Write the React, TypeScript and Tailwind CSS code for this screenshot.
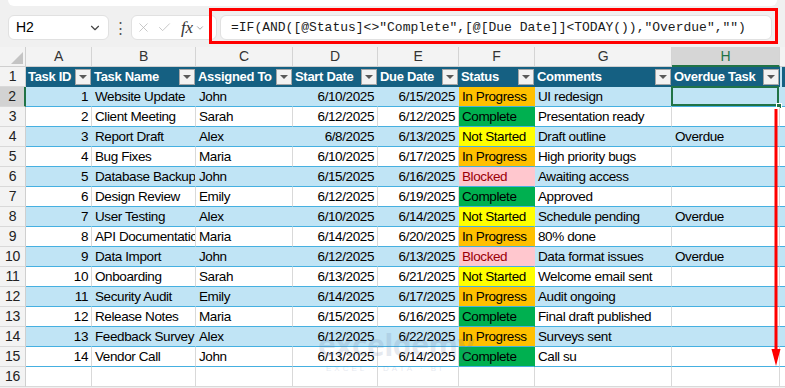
import { X, Check, ChevronDown } from "lucide-react";

type Status = "In Progress" | "Complete" | "Not Started" | "Blocked";

type Task = {
  id: number;
  name: string;
  who: string;
  start: string;
  due: string;
  status: Status;
  comment: string;
  overdue: string;
};

const tasks: Task[] = [
  { id: 1, name: "Website Update", who: "John", start: "6/10/2025", due: "6/15/2025", status: "In Progress", comment: "UI redesign", overdue: "" },
  { id: 2, name: "Client Meeting", who: "Sarah", start: "6/12/2025", due: "6/12/2025", status: "Complete", comment: "Presentation ready", overdue: "" },
  { id: 3, name: "Report Draft", who: "Alex", start: "6/8/2025", due: "6/13/2025", status: "Not Started", comment: "Draft outline", overdue: "Overdue" },
  { id: 4, name: "Bug Fixes", who: "Maria", start: "6/10/2025", due: "6/17/2025", status: "In Progress", comment: "High priority bugs", overdue: "" },
  { id: 5, name: "Database Backup", who: "John", start: "6/15/2025", due: "6/16/2025", status: "Blocked", comment: "Awaiting access", overdue: "" },
  { id: 6, name: "Design Review", who: "Emily", start: "6/12/2025", due: "6/19/2025", status: "Complete", comment: "Approved", overdue: "" },
  { id: 7, name: "User Testing", who: "Alex", start: "6/10/2025", due: "6/14/2025", status: "Not Started", comment: "Schedule pending", overdue: "Overdue" },
  { id: 8, name: "API Documentation", who: "Maria", start: "6/14/2025", due: "6/20/2025", status: "In Progress", comment: "80% done", overdue: "" },
  { id: 9, name: "Data Import", who: "John", start: "6/12/2025", due: "6/13/2025", status: "Blocked", comment: "Data format issues", overdue: "Overdue" },
  { id: 10, name: "Onboarding", who: "Sarah", start: "6/13/2025", due: "6/21/2025", status: "Not Started", comment: "Welcome email sent", overdue: "" },
  { id: 11, name: "Security Audit", who: "Emily", start: "6/14/2025", due: "6/17/2025", status: "In Progress", comment: "Audit ongoing", overdue: "" },
  { id: 12, name: "Release Notes", who: "Maria", start: "6/15/2025", due: "6/16/2025", status: "Complete", comment: "Final draft published", overdue: "" },
  { id: 13, name: "Feedback Survey", who: "Alex", start: "6/12/2025", due: "6/22/2025", status: "In Progress", comment: "Surveys sent", overdue: "" },
  { id: 14, name: "Vendor Call", who: "John", start: "6/13/2025", due: "6/14/2025", status: "Complete", comment: "Call su", overdue: "" },
];

const statusStyle: Record<Status, string> = {
  "In Progress": "bg-[#ffc000] text-black",
  Complete: "bg-[#00b050] text-black",
  "Not Started": "bg-[#ffff00] text-black",
  Blocked: "bg-[#ffc7ce] text-[#9c0006]",
};

// column widths A..H, I fills the rest
const colW = ["w-[66px]", "w-[104px]", "w-[97px]", "w-[85px]", "w-[81px]", "w-[76px]", "w-[137px]", "w-[108px]"];
const letters = ["A", "B", "C", "D", "E", "F", "G", "H"];
const headers = ["Task ID", "Task Name", "Assigned To", "Start Date", "Due Date", "Status", "Comments", "Overdue Task"];

const cell = "h-5 shrink-0 border-b border-r overflow-hidden whitespace-nowrap leading-[19px] px-[3px] text-[13.5px] tracking-[-0.4px]";

function RowHead({ n, active }: { n: number; active?: boolean }) {
  return (
    <div
      className={
        "w-[26px] h-5 shrink-0 border-b border-b-[#d9d9d9] text-center leading-[19px] text-[14px] text-[#222] " +
        (active ? "bg-[#d2d2d2] border-r-2 border-r-[#217346]" : "bg-[#f3f3f3] border-r border-r-[#cfcfcf]")
      }
    >
      {n}
    </div>
  );
}

function FilterButton() {
  return (
    <div className="absolute right-[1px] top-[2px] w-4 h-4 bg-[#f2f2f2] border border-[#a6a6a6] flex items-center justify-center">
      <div className="w-0 h-0 border-l-[4px] border-r-[4px] border-t-[4px] border-l-transparent border-r-transparent border-t-[#595959]" />
    </div>
  );
}

function DataRow({ t, i }: { t: Task; i: number }) {
  const band = i % 2 === 0;
  const bg = band ? "bg-[#c0e4f5]" : "bg-white";
  const grid = band ? "border-r-transparent" : "border-r-[#d9d9d9]";
  const base = `${cell} ${bg} ${grid} border-b-[#45b0e1]`;
  return (
    <div className="flex">
      <RowHead n={i + 2} active={i === 0} />
      <div className={`${base} ${colW[0]} text-right`}>{t.id}</div>
      <div className={`${base} ${colW[1]}`}>{t.name}</div>
      <div className={`${base} ${colW[2]}`}>{t.who}</div>
      <div className={`${base} ${colW[3]} text-right`}>{t.start}</div>
      <div className={`${base} ${colW[4]} text-right`}>{t.due}</div>
      <div className={`${cell} ${colW[5]} border-r-transparent border-b-[#45b0e1] ${statusStyle[t.status]}`}>{t.status}</div>
      <div className={`${base} ${colW[6]}`}>{t.comment}</div>
      <div className={`${base} ${colW[7]} relative overflow-visible`}>
        {t.overdue}
        {i === 0 && (
          <>
            <div className="absolute -left-px -top-px right-0 bottom-0 border-2 border-[#217346]" />
            <div className="absolute -right-[3px] -bottom-[3px] w-[6px] h-[6px] bg-[#217346] border border-white" />
          </>
        )}
      </div>
      <div className={`h-5 flex-1 border-b border-b-[#45b0e1] ${bg}`} />
    </div>
  );
}

export default function App() {
  return (
    <div
      className="relative w-[785px] h-[388px] overflow-hidden bg-[#f0f0f0] text-[14px] tracking-[-0.2px] text-black"
      style={{ fontFamily: '"Liberation Sans", Arial, sans-serif' }}
    >
      {/* ribbon edge */}
      <div className="mx-[8px] w-[769px] h-[6px] bg-white rounded-b-[6px]" />

      {/* formula bar */}
      <div className="flex items-center h-[25px] mt-[9px] pl-[8px]">
        <div className="w-[101px] h-[25px] bg-white border border-[#e1e1e1] rounded-[6px] flex items-center justify-between pl-[7px] pr-[6px]">
          <span className="text-[14px]">H2</span>
          <ChevronDown size={14} className="text-[#444]" />
        </div>
        <div className="w-[22px] text-center text-[#555] text-[15px] leading-none">⋮</div>
        <div className="w-[86px] h-[25px] bg-white border border-[#e1e1e1] rounded-[6px] flex items-center pl-[4px] gap-[6px]">
          <X size={15} strokeWidth={1.2} className="text-[#b5b5b5]" />
          <Check size={15} strokeWidth={1.2} className="text-[#b5b5b5]" />
          <span className="italic text-[17px] text-[#333] leading-none ml-[3px]" style={{ fontFamily: '"Liberation Serif", serif' }}>
            fx
          </span>
          <ChevronDown size={10} className="text-[#999] -ml-[4px]" />
        </div>
        <div className="ml-[3px] w-[552px] h-[25px] bg-white border border-[#e1e1e1] rounded-[6px] flex items-center pl-[10px]">
          <span className="text-[13px] tracking-normal text-[#1a1a1a] whitespace-nowrap" style={{ fontFamily: '"Liberation Mono", monospace' }}>
            =IF(AND([@Status]&lt;&gt;"Complete",[@[Due Date]]&lt;TODAY()),"Overdue","")
          </span>
        </div>
      </div>

      {/* column letters */}
      <div className="flex mt-[7px]">
        <div className="w-[26px] h-5 shrink-0 bg-[#f3f3f3] border-r border-b border-[#cfcfcf] relative">
          <div className="absolute right-[2px] bottom-[2px] w-0 h-0 border-b-[12px] border-l-[12px] border-b-[#c4c4c4] border-l-transparent" />
        </div>
        {letters.map((l, k) => (
          <div
            key={l}
            className={
              `${colW[k]} h-5 shrink-0 border-r border-r-[#d4d4d4] text-center text-[14px] ` +
              (l === "H"
                ? "bg-[#d6d6d6] text-[#217346] border-b-2 border-b-[#217346] leading-[18px]"
                : "bg-[#f3f3f3] text-[#333] border-b border-b-[#cfcfcf] leading-[19px]")
            }
          >
            {l}
          </div>
        ))}
        <div className="h-5 flex-1 bg-[#f3f3f3] border-b border-[#cfcfcf]" />
      </div>

      {/* header row */}
      <div className="flex">
        <RowHead n={1} />
        {headers.map((h, k) => (
          <div
            key={h}
            className={`${colW[k]} h-5 shrink-0 relative bg-[#156082] border-b border-b-[#156082] text-white font-bold text-[13px] tracking-[-0.3px] leading-[19px] pl-[2px] overflow-hidden whitespace-nowrap`}
          >
            {h}
            <FilterButton />
          </div>
        ))}
        <div className="h-5 flex-1 bg-[#156082] border-l-2 border-l-[#c0e4f5]" />
      </div>

      {tasks.map((t, i) => (
        <DataRow key={t.id} t={t} i={i} />
      ))}

      {/* empty row 16 */}
      <div className="flex">
        <RowHead n={16} />
        {colW.map((w) => (
          <div key={w} className={`${cell} ${w} bg-white border-r-[#d9d9d9] border-b-[#d9d9d9]`} />
        ))}
        <div className="h-5 flex-1 bg-white border-b border-b-[#d9d9d9]" />
      </div>

      {/* watermark */}
      <div className="absolute left-[318px] top-[330px] pointer-events-none select-none opacity-[0.15] text-[#5a6f9a]">
        <div className="text-[30px] font-bold leading-none tracking-[-0.5px]" style={{ fontFamily: '"Open Sans", sans-serif' }}>
          exceldemy
        </div>
        <div className="text-[8px] tracking-[3px] mt-[3px] pl-[8px]">EXCEL · DATA · BI</div>
      </div>

      {/* annotation: red box around formula */}
      <div className="absolute left-[209px] top-[8px] w-[569px] h-[36px] border-[3px] border-[#ff0000] pointer-events-none" />

      {/* annotation: red arrow down column H */}
      <svg className="absolute left-[771px] top-[109px]" width="10" height="258" viewBox="0 0 10 258">
        <line x1="5" y1="0" x2="5" y2="242" stroke="#ff0000" strokeWidth="3" />
        <polygon points="0.5,240 9.5,240 5,257" fill="#ff0000" />
      </svg>
    </div>
  );
}
